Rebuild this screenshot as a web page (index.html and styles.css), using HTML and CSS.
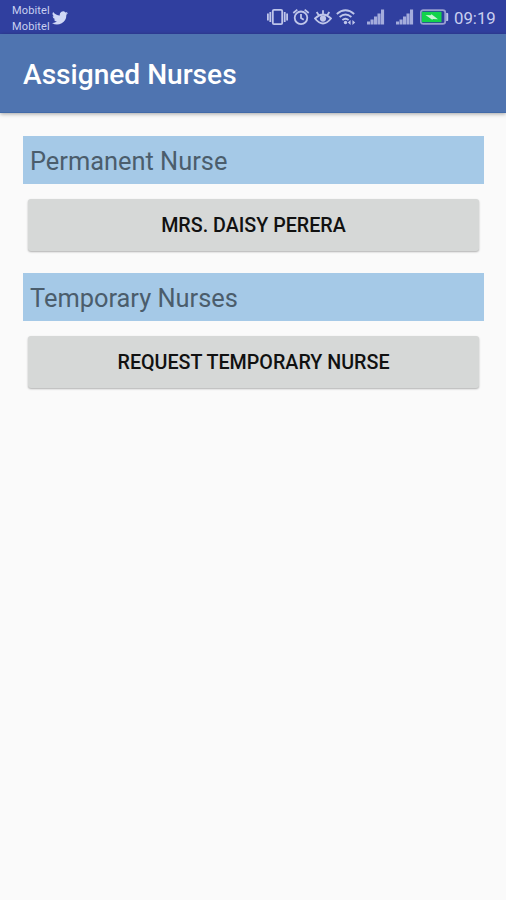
FILE: index.html
```html
<!DOCTYPE html>
<html lang="en">
<head>
<meta charset="utf-8">
<title>Assigned Nurses</title>
<link rel="stylesheet" href="styles.css">
</head>
<body>
<div class="status">
  <div class="carriers"><span>Mobitel</span><span>Mobitel</span></div>
  <svg class="bird" width="16" height="14" viewBox="0 0 24 20"><path d="M24 2.4a10 10 0 0 1-2.800.8A5 5 0 0 0 23.300.5a10 10 0 0 1-3.100 1.200 4.900 4.900 0 0 0-8.400 4.500A14 14 0 0 1 1.700 1a4.900 4.900 0 0 0 1.500 6.600 5 5 0 0 1-2.200-.6 4.900 4.900 0 0 0 3.900 4.900 5 5 0 0 1-2.200.1 4.900 4.900 0 0 0 4.600 3.400A10 10 0 0 1 0 17.400 14 14 0 0 0 21.500 5a10 10 0 0 0 2.500-2.600z"/></svg>
  <div class="icons">
    <svg width="21" height="18" viewBox="0 0 21 18"><rect x="5.800" y="1.800" width="9.400" height="14.400" rx="1.200"/><path d="M3.300 4v10M17.700 4v10M.9 5.500v7M20.100 5.500v7"/></svg>
    <svg width="18" height="18" viewBox="0 0 18 18"><circle cx="9" cy="9.800" r="6.300"/><path d="M1.300 5l4-3.400M16.700 5l-4-3.400M9 6v4l2.700 1.800"/></svg>
    <svg width="18" height="18" viewBox="0 0 18 18"><path d="M1 10.500q8-8 16 0q-8 10-16 0zM9 6V2.200M4.600 7L2.700 4M13.400 7l1.900-3"/><circle class="solid" cx="9" cy="10.600" r="3.100"/></svg>
    <svg class="wifi" width="20" height="18" viewBox="0 0 20 18"><path d="M.8 6Q9.500-1.500 18.200 6M3.600 9q5.900-5 11.800 0M6.400 12q3.100-2.600 6.200 0"/><circle class="solid" cx="9.500" cy="14.500" r="1.700"/><path class="solid" d="M11.800 14.500l2.800-2.500v5zM19.200 14.500l-2.800-2.500v5z"/></svg>
    <svg class="signal" width="18" height="18" viewBox="0 0 18 18"><path d="M0 16.500v-3h3v3zM3.500 16.500v-5h3.100v5zM7 16.500v-8h3.100v8zM10.500 16.500v-11h3.100v11zM14 16.500V1.500h3.100v15z"/></svg>
    <svg class="signal second" width="18" height="18" viewBox="0 0 18 18"><path d="M0 16.500v-3h3v3zM3.500 16.500v-5h3.100v5zM7 16.500v-8h3.100v8zM10.500 16.500v-11h3.100v11zM14 16.500V1.500h3.100v15z"/></svg>
    <svg class="battery" width="29" height="16" viewBox="0 0 29 16"><rect x=".8" y="1.200" width="24.400" height="13.600" rx="2.400"/><path class="cap" d="M26.200 4h1.200q.8 0 .8.8v6.400q0 .8-.8.8h-1.200z"/><rect class="charge" x="1.800" y="2.800" width="19.700" height="10.400"/><path class="bolt" d="M5.500 6l5 .2 1-1 6.500 5-5-.2-.8.8z"/></svg>
  </div>
  <time>09:19</time>
</div>
<header><h1>Assigned Nurses</h1></header>
<main>
  <h2>Permanent Nurse</h2>
  <button>MRS. DAISY PERERA</button>
  <h2>Temporary Nurses</h2>
  <button>REQUEST TEMPORARY NURSE</button>
</main>
</body>
</html>
```
FILE: styles.css
```css
* { box-sizing: border-box; }
body {
  margin: 0;
  min-height: 900px;
  background: #fafafa;
  font-family: Roboto, sans-serif;
}
.status {
  display: flex;
  align-items: center;
  height: 34px;
  padding: 0 10px 0 12px;
  background: #303f9f;
  color: #c9cff0;
}
.carriers {
  display: flex;
  flex-direction: column;
  width: 38px;
  padding-top: 3px;
  font-size: 11px;
  line-height: 15.5px;
  letter-spacing: .15px;
}
.bird { margin: 2px 0 0 2px; fill: #d0d9f6; }
.icons {
  display: flex;
  align-items: center;
  margin-left: auto;
  gap: 4px;
}
.icons svg { fill: none; stroke: #bfc6ea; stroke-width: 1.8; }
.icons .solid { fill: #bfc6ea; stroke: none; }
.icons .wifi { margin-left: 0; }
.icons .signal { margin-left: 7px; fill: #a4acdc; stroke: none; }
.icons .battery { margin-left: 2px; stroke: #969ed0; }
.icons .cap { fill: #bfc6ea; stroke: none; }
.icons .charge { fill: #12d34c; stroke: none; }
.icons .bolt { fill: #c8f5d6; stroke: none; }
time { width: 42px; margin: 1px 0 0 5px; font-size: 16.800px; line-height: 20px; white-space: nowrap; }
header {
  display: flex;
  align-items: center;
  height: 79px;
  padding: 4px 23px 0;
  background: #4f74b0;
  border-bottom: 1px solid #426aa8;
  box-shadow: 0 1px 4px rgba(0, 0, 0, .35);
}
h1 { margin: 0; color: #fff; font-size: 28.100px; font-weight: 500; line-height: 36px; white-space: nowrap; }
main { display: flex; flex-direction: column; padding: 23px 22px 0 23px; }
h2 {
  height: 47.500px;
  margin: 0;
  padding: 2px 7px 0;
  background: #a5c9e7;
  color: #4b5d6c;
  font-size: 25.400px;
  font-weight: 400;
  line-height: 46px;
}
button {
  height: 52px;
  margin: 15px 5px 22.500px;
  padding: 3px 0 0;
  border: 0;
  border-radius: 3px;
  background: #d6d8d7;
  box-shadow: 0 1px 2px rgba(0, 0, 0, .3);
  color: #111;
  font: 500 19.700px/24px Roboto, sans-serif;
}
```
